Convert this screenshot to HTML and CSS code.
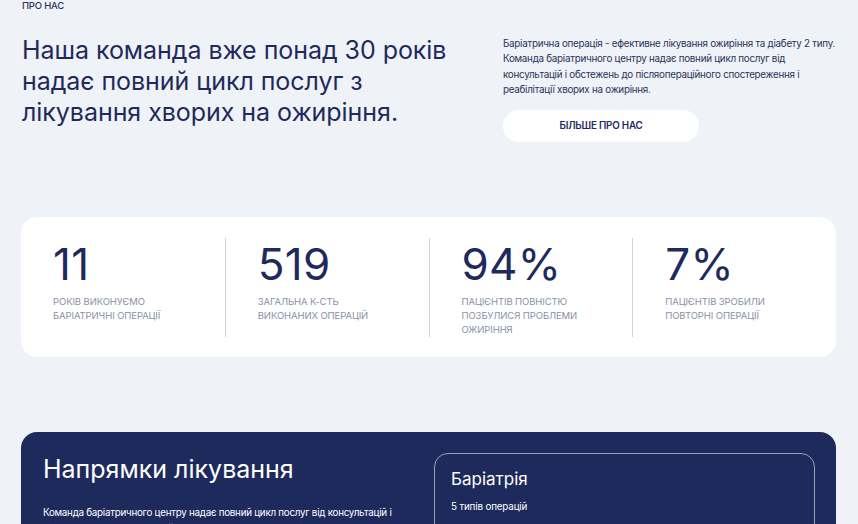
FILE: index.html
```html
<!DOCTYPE html>
<html lang="uk">
<head>
<meta charset="utf-8">
<link rel="stylesheet" href="styles.css">
</head>
<body>
<main class="page">
  <section class="about">
    <div class="eyebrow">ПРО НАС</div>
    <div class="about-row">
      <h1 class="about-title">Наша команда вже понад 30 років надає повний цикл послуг з лікування хворих на ожиріння.</h1>
      <div class="about-side">
        <p class="about-text">Баріатрична операція - ефективне лікування ожиріння та діабету 2 типу. Команда баріатричного центру надає повний цикл послуг від консультацій і обстежень до післяопераційного спостереження і реабілітації хворих на ожиріння.</p>
        <a class="btn-more" href="#">БІЛЬШЕ ПРО НАС</a>
      </div>
    </div>
  </section>

  <section class="stats">
    <div class="stat">
      <div class="stat-num">11</div>
      <div class="stat-label">РОКІВ ВИКОНУЄМО БАРІАТРИЧНІ ОПЕРАЦІЇ</div>
    </div>
    <div class="stat">
      <div class="stat-num">519</div>
      <div class="stat-label">ЗАГАЛЬНА К-СТЬ ВИКОНАНИХ ОПЕРАЦІЙ</div>
    </div>
    <div class="stat">
      <div class="stat-num">94%</div>
      <div class="stat-label">ПАЦІЄНТІВ ПОВНІСТЮ ПОЗБУЛИСЯ ПРОБЛЕМИ ОЖИРІННЯ</div>
    </div>
    <div class="stat">
      <div class="stat-num">7%</div>
      <div class="stat-label">ПАЦІЄНТІВ ЗРОБИЛИ ПОВТОРНІ ОПЕРАЦІЇ</div>
    </div>
  </section>

  <section class="directions">
    <div class="dir-intro">
      <h2 class="dir-title">Напрямки лікування</h2>
      <p class="dir-text">Команда баріатричного центру надає повний цикл послуг від консультацій і обстежень до післяопераційного спостереження і реабілітації хворих на ожиріння.</p>
    </div>
    <div class="dir-card">
      <h3 class="dir-card-title">Баріатрія</h3>
      <div class="dir-card-sub">5 типів операцій</div>
    </div>
  </section>
</main>
</body>
</html>
```

FILE: styles.css
```css
* { box-sizing: border-box; }
html, body {
  margin: 0;
  padding: 0;
  background: #eff2f7;
  font-family: Inter, "Noto Sans", sans-serif;
  color: #1f2a5c;
  overflow: hidden;
}
.page {
  padding: 0 22px 0 21px;
}
.eyebrow {
  font-size: 9.5px;
  line-height: 12px;
  font-weight: 500;
  color: #2a335a;
  padding-left: 1px;
  letter-spacing: -0.2px;
}
.about-row {
  display: grid;
  grid-template-columns: 1fr 333px;
  column-gap: 30px;
  margin-top: 23px;
}
.about-title {
  margin: 0;
  padding-left: 1px;
  font-size: 25px;
  line-height: 31px;
  font-weight: 400;
  letter-spacing: -0.05px;
  color: #1f2a5c;
}
.about-text {
  margin: 0;
  padding-top: 1px;
  font-size: 9.8px;
  line-height: 15.4px;
  letter-spacing: -0.25px;
  color: #2a335a;
}
.btn-more {
  display: flex;
  align-items: center;
  justify-content: center;
  width: 196px;
  height: 32px;
  margin-top: 12px;
  background: #fff;
  border-radius: 16px;
  font-size: 9.8px;
  font-weight: 600;
  letter-spacing: -0.2px;
  color: #1f2a5c;
  text-decoration: none;
}
.stats {
  display: grid;
  grid-template-columns: repeat(4, 1fr);
  margin-top: 75px;
  background: #fff;
  border-radius: 16px;
  padding: 21px 0 20px;
}
.stat {
  padding-left: 32px;
  padding-right: 20px;
  min-height: 97px;
}
.stat + .stat {
  border-left: 1px solid #cfd3dd;
}
.stat-num {
  font-size: 44px;
  line-height: 52px;
  font-weight: 400;
  color: #1f2a5c;
  letter-spacing: 0.3px;
}
.stat-label {
  margin-top: 5px;
  max-width: 135px;
  font-size: 9.5px;
  line-height: 14px;
  letter-spacing: -0.1px;
  color: #8a91a8;
}
.directions {
  display: grid;
  grid-template-columns: 1fr 381px;
  column-gap: 20px;
  margin-top: 75px;
  background: #1f2a5c;
  border-radius: 16px;
  padding: 21px 21px 40px 22px;
  color: #fff;
  min-height: 160px;
}
.dir-title {
  margin: 0;
  font-size: 25px;
  line-height: 32px;
  font-weight: 400;
}
.dir-text {
  margin: 20px 0 0;
  font-size: 9.8px;
  line-height: 16px;
  letter-spacing: -0.25px;
  color: #fff;
}
.dir-card {
  border: 1px solid rgba(255,255,255,0.55);
  border-radius: 14px;
  padding: 13px 16px 40px;
  min-height: 120px;
}
.dir-card-title {
  margin: 0;
  font-size: 17px;
  line-height: 24px;
  font-weight: 400;
}
.dir-card-sub {
  margin-top: 9px;
  font-size: 9.8px;
  line-height: 14px;
  letter-spacing: -0.15px;
}
```
